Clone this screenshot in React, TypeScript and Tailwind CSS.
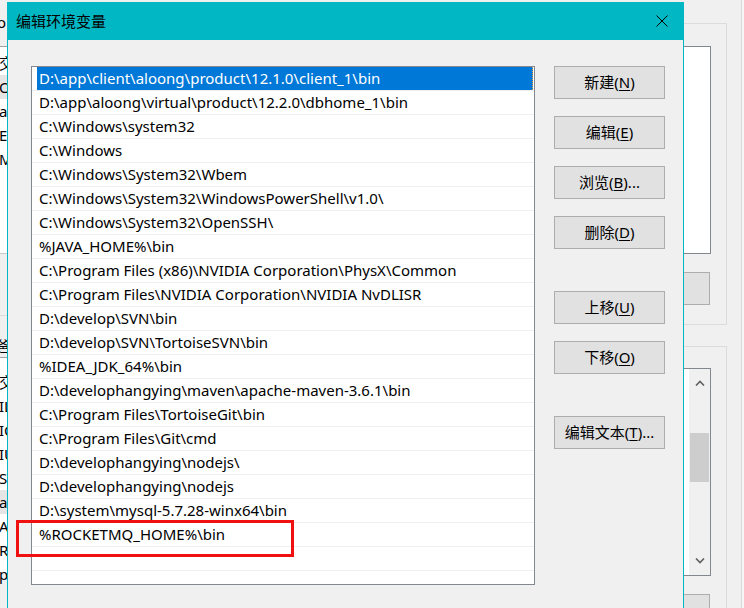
import React from "react";

const paths = [
  "D:\\app\\client\\aloong\\product\\12.1.0\\client_1\\bin",
  "D:\\app\\aloong\\virtual\\product\\12.2.0\\dbhome_1\\bin",
  "C:\\Windows\\system32",
  "C:\\Windows",
  "C:\\Windows\\System32\\Wbem",
  "C:\\Windows\\System32\\WindowsPowerShell\\v1.0\\",
  "C:\\Windows\\System32\\OpenSSH\\",
  "%JAVA_HOME%\\bin",
  "C:\\Program Files (x86)\\NVIDIA Corporation\\PhysX\\Common",
  "C:\\Program Files\\NVIDIA Corporation\\NVIDIA NvDLISR",
  "D:\\develop\\SVN\\bin",
  "D:\\develop\\SVN\\TortoiseSVN\\bin",
  "%IDEA_JDK_64%\\bin",
  "D:\\develophangying\\maven\\apache-maven-3.6.1\\bin",
  "C:\\Program Files\\TortoiseGit\\bin",
  "C:\\Program Files\\Git\\cmd",
  "D:\\develophangying\\nodejs\\",
  "D:\\develophangying\\nodejs",
  "D:\\system\\mysql-5.7.28-winx64\\bin",
  "%ROCKETMQ_HOME%\\bin",
  "",
  "",
];

const buttons = [
  { label: "新建(", key: "N", tail: ")", mt: "mt-0" },
  { label: "编辑(", key: "E", tail: ")", mt: "mt-[17px]" },
  { label: "浏览(", key: "B", tail: ")...", mt: "mt-[17px]" },
  { label: "删除(", key: "D", tail: ")", mt: "mt-[17px]" },
  { label: "上移(", key: "U", tail: ")", mt: "mt-[42px]" },
  { label: "下移(", key: "O", tail: ")", mt: "mt-[17px]" },
  { label: "编辑文本(", key: "T", tail: ")...", mt: "mt-[42px]" },
];

// rows of the window behind, only a sliver shows on the left
const leftTop = ["交", "Or", "a", "E", "M", "", "", "", ""];
const leftBottom = ["交", "IL", "IC", "IU", "S", "a", "A", "R", "p"];

function SideList({ scroll }: { scroll?: boolean }) {
  return (
    <div className="w-[51px] h-[208px] shrink-0 border border-[#828790] border-l-0 bg-white flex">
      <div className="w-[5px] flex flex-col pt-[1px]">
        <div className="ml-[3px] w-[1px] h-[26px] bg-[#e8e8e8]" />
        <div className={`${scroll ? "mt-[96px]" : "mt-0"} h-[24px] bg-[#efefef]`} />
      </div>
      <div className="flex-1" />
      {scroll ? (
        <div className="w-[21px] bg-[#f0f0f0] flex flex-col items-center">
          <svg width="10" height="6" viewBox="0 0 10 6" className="mt-[11px]">
            <path d="M1 5.5 L5 1.5 L9 5.5" fill="none" stroke="#606060" strokeWidth="1.6" />
          </svg>
          <div className="mt-[47px] w-[19px] h-[49px] bg-[#cdcdcd]" />
          <div className="flex-1" />
          <svg width="10" height="6" viewBox="0 0 10 6" className="mb-[11px]">
            <path d="M1 0.5 L5 4.5 L9 0.5" fill="none" stroke="#606060" strokeWidth="1.6" />
          </svg>
        </div>
      ) : null}
    </div>
  );
}

function BackWindow() {
  return (
    <div className="absolute inset-0 bg-[#f0f0f0] flex">
      {/* left sliver */}
      <div className="w-[8px] h-full overflow-hidden shrink-0">
        <div className="h-[46px] pt-[10px] pl-0 text-[15px] leading-[24px] whitespace-nowrap ml-[-3px]">o</div>
        <div className="border-t border-[#a0a0a0] bg-white h-[207px] pt-[4px]">
          {leftTop.map((t, i) => (
            <div
              key={i}
              className={`h-[24px] leading-[24px] text-[15px] whitespace-nowrap ml-[-1px] ${i === 1 ? "bg-[#e5e5e5]" : ""}`}
            >
              {t}
            </div>
          ))}
        </div>
        <div className="border-t border-[#c8c8c8] h-[62px]" />
        <div className="border-t border-[#dcdcdc] h-[42px] pt-[20px] text-[14px] leading-[20px] ml-[-4px]">
          爸
        </div>
        <div className="bg-white h-[217px] pt-[12px] border-t border-[#a0a0a0]">
          {leftBottom.map((t, i) => (
            <div
              key={i}
              className={`h-[24px] leading-[24px] text-[15px] whitespace-nowrap ml-[-1px] ${i === 5 ? "bg-[#e5e5e5]" : ""}`}
            >
              {t}
            </div>
          ))}
        </div>
      </div>

      <div className="flex-1" />

      {/* right side of the window behind */}
      <div className="w-[84px] h-full flex shrink-0">
        <div className="w-[67px] h-full overflow-hidden flex flex-col pt-[23px]">
          <div className="h-[302px] shrink-0 border border-[#dcdcdc] border-l-0 pt-[22px] flex flex-col">
            <SideList />
            <div className="mt-[18px] w-[50px] h-[33px] shrink-0 border border-[#adadad] border-l-0 bg-[#e1e1e1]" />
          </div>
          <div className="mt-[21px] h-[300px] shrink-0 border border-[#dcdcdc] border-l-0 pt-[21px] flex flex-col">
            <SideList scroll />
            <div className="mt-[18px] w-[50px] h-[33px] shrink-0 border border-[#adadad] border-l-0 bg-[#e1e1e1]" />
          </div>
        </div>
        <div className="ml-[14px] w-[1px] h-full bg-[#d8d8d8]" />
        <div className="w-[2px] h-full bg-[#f6f6f6]" />
      </div>
    </div>
  );
}

export default function App() {
  return (
    <div
      className="relative w-[744px] h-[608px] overflow-hidden text-black"
      style={{ fontFamily: '"Noto Sans", "Noto Sans CJK SC", sans-serif' }}
    >
      <BackWindow />

      {/* dialog window on top */}
      <div className="absolute left-[7px] top-[2px] w-[677px] h-[640px] border-x border-[#00b7c3] bg-[#f0f0f0]">
        <div className="h-[38px] bg-[#00b7c3] flex items-center justify-between pl-[9px] pr-[16px] mx-[-1px]">
          <span className="text-[15px] text-black" style={{ fontFamily: '"Noto Sans CJK SC", sans-serif' }}>
            编辑环境变量
          </span>
          <svg width="12" height="12" viewBox="0 0 12 12">
            <path d="M0.5 0.5 L11.5 11.5 M11.5 0.5 L0.5 11.5" stroke="#000" strokeWidth="1" />
          </svg>
        </div>

        <div className="flex pl-[23px] pt-[26px]">
          <div className="w-[504px] h-[519px] border border-[#828790] bg-white overflow-hidden">
            {paths.map((p, i) => (
              <div key={i} className="h-[24px] border-b border-[#efefef] flex">
                {i === 0 ? (
                  <div className="flex-1 ml-[5px] mr-[1px] bg-[#0078d7] text-white pl-[2px] text-[15px] leading-[23px] whitespace-nowrap border-r border-dotted border-[#f0a040]">
                    {p}
                  </div>
                ) : (
                  <div className="pl-[7px] text-[15px] leading-[23px] whitespace-nowrap">{p}</div>
                )}
              </div>
            ))}
          </div>

          <div className="ml-[19px] flex flex-col">
            {buttons.map((b) => (
              <button
                key={b.key}
                type="button"
                className={`${b.mt} w-[111px] h-[33px] border border-[#adadad] bg-[#e1e1e1] text-[15px] leading-none text-black flex items-center justify-center pb-[1px]`}
              >
                {b.label}
                <span className="underline underline-offset-2">{b.key}</span>
                {b.tail}
              </button>
            ))}
          </div>
        </div>
      </div>

      {/* red highlight box drawn over the screenshot */}
      <div className="absolute left-[16px] top-[520px] w-[278px] h-[37px] border-[3px] border-[#f01010]" />
    </div>
  );
}
